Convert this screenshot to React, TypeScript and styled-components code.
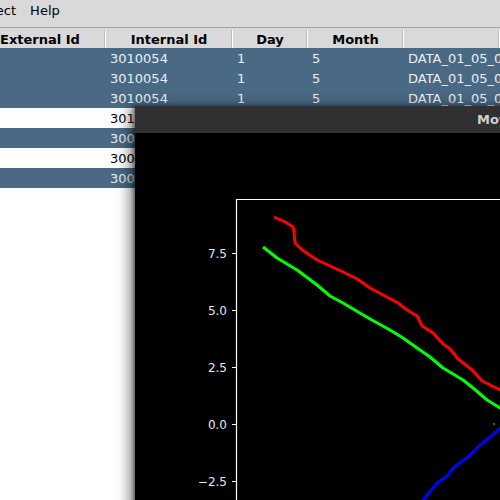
import React from "react";
import styled, { createGlobalStyle } from "styled-components";

const Global = createGlobalStyle`
  html, body { margin: 0; padding: 0; background: #ffffff; overflow: hidden; }
  body { font-family: "DejaVu Sans", sans-serif; }
`;

const Screen = styled.div`
  position: relative;
  width: 500px;
  height: 500px;
  overflow: hidden;
  background: #ffffff;
`;

const MenuBar = styled.div`
  display: flex;
  align-items: flex-start;
  gap: 14px;
  height: 24px;
  padding-top: 3px;
  background: #d9d9d9;
  border-bottom: 1px solid #a3a3a3;
  font-size: 13px;
  line-height: 16px;
  color: #000;
  overflow: hidden;
`;

const MenuItem = styled.span<{ $shift?: number }>`
  margin-left: ${(p) => p.$shift ?? 0}px;
  white-space: nowrap;
`;

const TableArea = styled.div`
  padding-top: 2px;
  background: #d9d9d9;
`;

const cols = "106px 127px 75px 96px 1fr";

const HeaderRow = styled.div`
  display: grid;
  grid-template-columns: ${cols};
  height: 18px;
  background: #d9d9d9;
`;

const HeaderCell = styled.div<{ $align?: string }>`
  display: flex;
  align-items: center;
  justify-content: ${(p) => p.$align ?? "center"};
  font-weight: bold;
  font-size: 13px;
  color: #000;
  border-right: 1px solid #ffffff;
  box-shadow: inset -1px 0 0 #bcbcbc;
  white-space: nowrap;
  overflow: hidden;
`;

const Body = styled.div`
  background: #ffffff;
`;

const Row = styled.div<{ $sel: boolean }>`
  display: grid;
  grid-template-columns: ${cols};
  height: 20px;
  background: ${(p) => (p.$sel ? "#4a6984" : "#ffffff")};
  color: ${(p) => (p.$sel ? "#eceff2" : "#000000")};
  font-size: 13px;
`;

const Cell = styled.div`
  display: flex;
  align-items: center;
  padding-left: 4px;
  white-space: nowrap;
  overflow: hidden;
`;

const Window = styled.div`
  position: absolute;
  left: 135px;
  top: 106px;
  width: 520px;
  height: 420px;
  background: #000;
  box-shadow: -6px 0 12px rgba(0, 0, 0, 0.45), -2px 0 3px rgba(0, 0, 0, 0.35);
  display: flex;
  flex-direction: column;
`;

const TitleBar = styled.div`
  height: 27px;
  background: #303030;
  display: flex;
  align-items: center;
  padding-left: 342px;
  color: #cfcfcf;
  font-weight: bold;
  font-size: 13px;
  white-space: nowrap;
`;

const Plot = styled.svg`
  display: block;
`;

const rows = [
  { sel: true, id: "3010054", day: "1", month: "5", name: "DATA_01_05_0" },
  { sel: true, id: "3010054", day: "1", month: "5", name: "DATA_01_05_0" },
  { sel: true, id: "3010054", day: "1", month: "5", name: "DATA_01_05_0" },
  { sel: false, id: "3010054", day: "1", month: "5", name: "DATA_01_05_0" },
  { sel: true, id: "3000054", day: "1", month: "5", name: "DATA_01_05_0" },
  { sel: false, id: "3000054", day: "1", month: "5", name: "DATA_01_05_0" },
  { sel: true, id: "3000054", day: "1", month: "5", name: "DATA_01_05_0" },
];

const red =
  "274,217 285,222 293,227 294,232 295,243 302,250 317,260 330,266 343,272 357,279 370,288 383,295 398,303 407,310 417,316 420,322 422,326 433,333 443,344 450,349 458,359 472,370 482,381 500,390 510,395";
const green =
  "263,247 277,258 297,270 317,285 330,296 343,303 353,309 370,319 390,330 403,338 417,348 430,357 443,368 463,380 473,388 487,400 500,408 510,414";
const blue =
  "415,510 423,500 437,483 447,476 453,468 470,455 480,445 490,437 500,428 510,420";

const ticks = [
  { y: 253, label: "7.5" },
  { y: 310, label: "5.0" },
  { y: 367, label: "2.5" },
  { y: 424, label: "0.0" },
  { y: 481, label: "\u22122.5" },
];

export default function App() {
  return (
    <Screen>
      <Global />
      <MenuBar>
        <MenuItem $shift={-24}>Select</MenuItem>
        <MenuItem>Help</MenuItem>
      </MenuBar>
      <TableArea>
        <HeaderRow>
          <HeaderCell $align="flex-start">External Id</HeaderCell>
          <HeaderCell>Internal Id</HeaderCell>
          <HeaderCell>Day</HeaderCell>
          <HeaderCell>Month</HeaderCell>
          <HeaderCell />
        </HeaderRow>
      </TableArea>
      <Body>
        {rows.map((r, i) => (
          <Row key={i} $sel={r.sel}>
            <Cell />
            <Cell>{r.id}</Cell>
            <Cell>{r.day}</Cell>
            <Cell>{r.month}</Cell>
            <Cell>{r.name}</Cell>
          </Row>
        ))}
      </Body>
      <Window>
        <TitleBar>Movement</TitleBar>
        <Plot width={365} height={367} viewBox="135 133 365 367">
          <rect x={135} y={133} width={365} height={367} fill="#000" />
          <path d="M236.5 520 V199.5 H520" stroke="#ffffff" strokeWidth={1.2} fill="none" />
          {ticks.map((t) => (
            <g key={t.label}>
              <line x1={232} x2={236} y1={t.y + 0.5} y2={t.y + 0.5} stroke="#fff" strokeWidth={1} />
              <text
                x={227}
                y={t.y + 4.5}
                textAnchor="end"
                fontFamily="DejaVu Sans, sans-serif"
                fontSize={12}
                fill="#e8e8e8"
              >
                {t.label}
              </text>
            </g>
          ))}
          <polyline points={red} stroke="#ff0000" strokeWidth={3} fill="none" strokeLinejoin="round" />
          <polyline points={green} stroke="#00ff00" strokeWidth={3} fill="none" strokeLinejoin="round" />
          <polyline points={blue} stroke="#0000ff" strokeWidth={3} fill="none" strokeLinejoin="round" />
          <rect x={493} y={423} width={2} height={2} fill="#008000" />
        </Plot>
      </Window>
    </Screen>
  );
}
